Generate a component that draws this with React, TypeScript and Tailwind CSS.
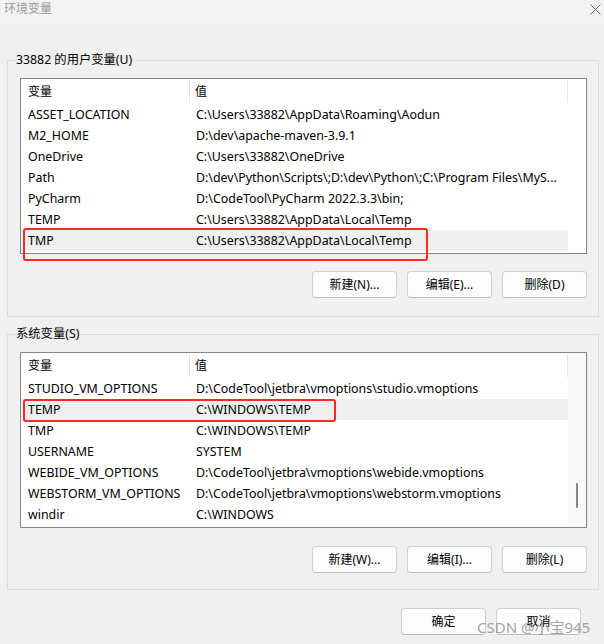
import React from "react";

type Row = { name: string; value: string; selected?: boolean };

const userRows: Row[] = [
  { name: "ASSET_LOCATION", value: "C:\\Users\\33882\\AppData\\Roaming\\Aodun" },
  { name: "M2_HOME", value: "D:\\dev\\apache-maven-3.9.1" },
  { name: "OneDrive", value: "C:\\Users\\33882\\OneDrive" },
  { name: "Path", value: "D:\\dev\\Python\\Scripts\\;D:\\dev\\Python\\;C:\\Program Files\\MyS..." },
  { name: "PyCharm", value: "D:\\CodeTool\\PyCharm 2022.3.3\\bin;" },
  { name: "TEMP", value: "C:\\Users\\33882\\AppData\\Local\\Temp" },
  { name: "TMP", value: "C:\\Users\\33882\\AppData\\Local\\Temp", selected: true },
];

const sysRows: Row[] = [
  { name: "STUDIO_VM_OPTIONS", value: "D:\\CodeTool\\jetbra\\vmoptions\\studio.vmoptions" },
  { name: "TEMP", value: "C:\\WINDOWS\\TEMP", selected: true },
  { name: "TMP", value: "C:\\WINDOWS\\TEMP" },
  { name: "USERNAME", value: "SYSTEM" },
  { name: "WEBIDE_VM_OPTIONS", value: "D:\\CodeTool\\jetbra\\vmoptions\\webide.vmoptions" },
  { name: "WEBSTORM_VM_OPTIONS", value: "D:\\CodeTool\\jetbra\\vmoptions\\webstorm.vmoptions" },
  { name: "windir", value: "C:\\WINDOWS" },
];

function Btn({ label }: { label: string }) {
  return (
    <div className="w-[85px] h-[27px] flex items-center justify-center bg-[#fdfdfd] border border-[#d0d0d0] border-b-[#bdbdbd] rounded-[4px] text-[12px] text-black">
      {label}
    </div>
  );
}

function ListView({ rows, scroll }: { rows: Row[]; scroll?: boolean }) {
  return (
    <div className="w-[567px] h-[176px] border border-[#828790] bg-white flex overflow-hidden text-[12.4px]">
      <div className="w-[547px] flex flex-col">
        <div className="h-[25px] flex items-stretch text-[12px]">
          <div className="w-[168px] pl-[7px] flex items-center">变量</div>
          <div className="w-px bg-[#e5e5e5] mt-[1px] mb-[1px]" />
          <div className="flex-1 pl-[5px] flex items-center">值</div>
          <div className="w-px bg-[#e5e5e5] mt-[1px] mb-[1px]" />
        </div>
        {rows.map((r) => (
          <div
            key={r.name + r.value}
            className={
              "h-[21px] pt-[2px] flex items-center whitespace-nowrap " +
              (r.selected ? "bg-[#efefef]" : "")
            }
          >
            <div className="w-[169px] pl-[7px] overflow-hidden">{r.name}</div>
            <div className="flex-1 pl-[6px] overflow-hidden">{r.value}</div>
          </div>
        ))}
      </div>
      {scroll ? (
        <div className="flex-1 bg-[#f8f8f8] flex flex-col">
          <div className="mt-[130px] ml-[8px] w-[2px] h-[25px] rounded-full bg-[#858585]" />
        </div>
      ) : (
        <div className="flex-1 bg-white" />
      )}
    </div>
  );
}

export default function App() {
  return (
    <div className="w-[604px] h-[644px] bg-[#f0f0f0] overflow-hidden relative text-[12px] text-black font-['Noto_Sans','Noto_Sans_CJK_SC',sans-serif]">
      <div className="h-[25px] bg-[#f3f3f3] flex items-center justify-between">
        <div className="pl-[4px] text-[#9a9a9a] leading-[16px] -mt-[7px]">环境变量</div>
        <svg width="11" height="11" viewBox="0 0 11 11" className="mr-[3px] -mt-[6px]">
          <path d="M0.5 0.5 L10.5 10.5 M10.5 0.5 L0.5 10.5" stroke="#6b6b6b" strokeWidth="1" fill="none" />
        </svg>
      </div>

      <div className="ml-[7px] w-[592px]">
        <div className="mt-[35px] relative border border-[#dcdcdc] pt-[17px] pl-[12px] pr-[11px] pb-[18px]">
          <div className="absolute left-[7px] -top-[9px] px-[1px] bg-[#f0f0f0] leading-[16px] text-[12.3px]">33882 的用户变量(U)</div>
          <ListView rows={userRows} />
          <div className="mt-[17px] flex justify-end gap-[10px]">
            <Btn label="新建(N)..." />
            <Btn label="编辑(E)..." />
            <Btn label="删除(D)" />
          </div>
        </div>

        <div className="mt-[17px] relative border border-[#dcdcdc] pt-[17px] pl-[12px] pr-[11px] pb-[16px]">
          <div className="absolute left-[7px] -top-[9px] px-[1px] bg-[#f0f0f0] leading-[16px] text-[12.3px]">系统变量(S)</div>
          <ListView rows={sysRows} scroll />
          <div className="mt-[18px] flex justify-end gap-[10px]">
            <Btn label="新建(W)..." />
            <Btn label="编辑(I)..." />
            <Btn label="删除(L)" />
          </div>
        </div>

        <div className="mt-[18px] flex justify-end gap-[10px] pr-[18px]">
          <Btn label="确定" />
          <Btn label="取消" />
        </div>
      </div>

      <div className="absolute left-[23px] top-[228px] w-[405px] h-[33px] border-2 border-[#ff2a1f] rounded-[3px]" />
      <div className="absolute left-[23px] top-[399px] w-[313px] h-[23px] border-2 border-[#ff2a1f] rounded-[3px]" />

      <div className="absolute left-[477px] top-[618px] text-[15px] leading-[18px] text-[#8c8c8c]/80 whitespace-nowrap">
        CSDN @小宝945
      </div>
    </div>
  );
}
